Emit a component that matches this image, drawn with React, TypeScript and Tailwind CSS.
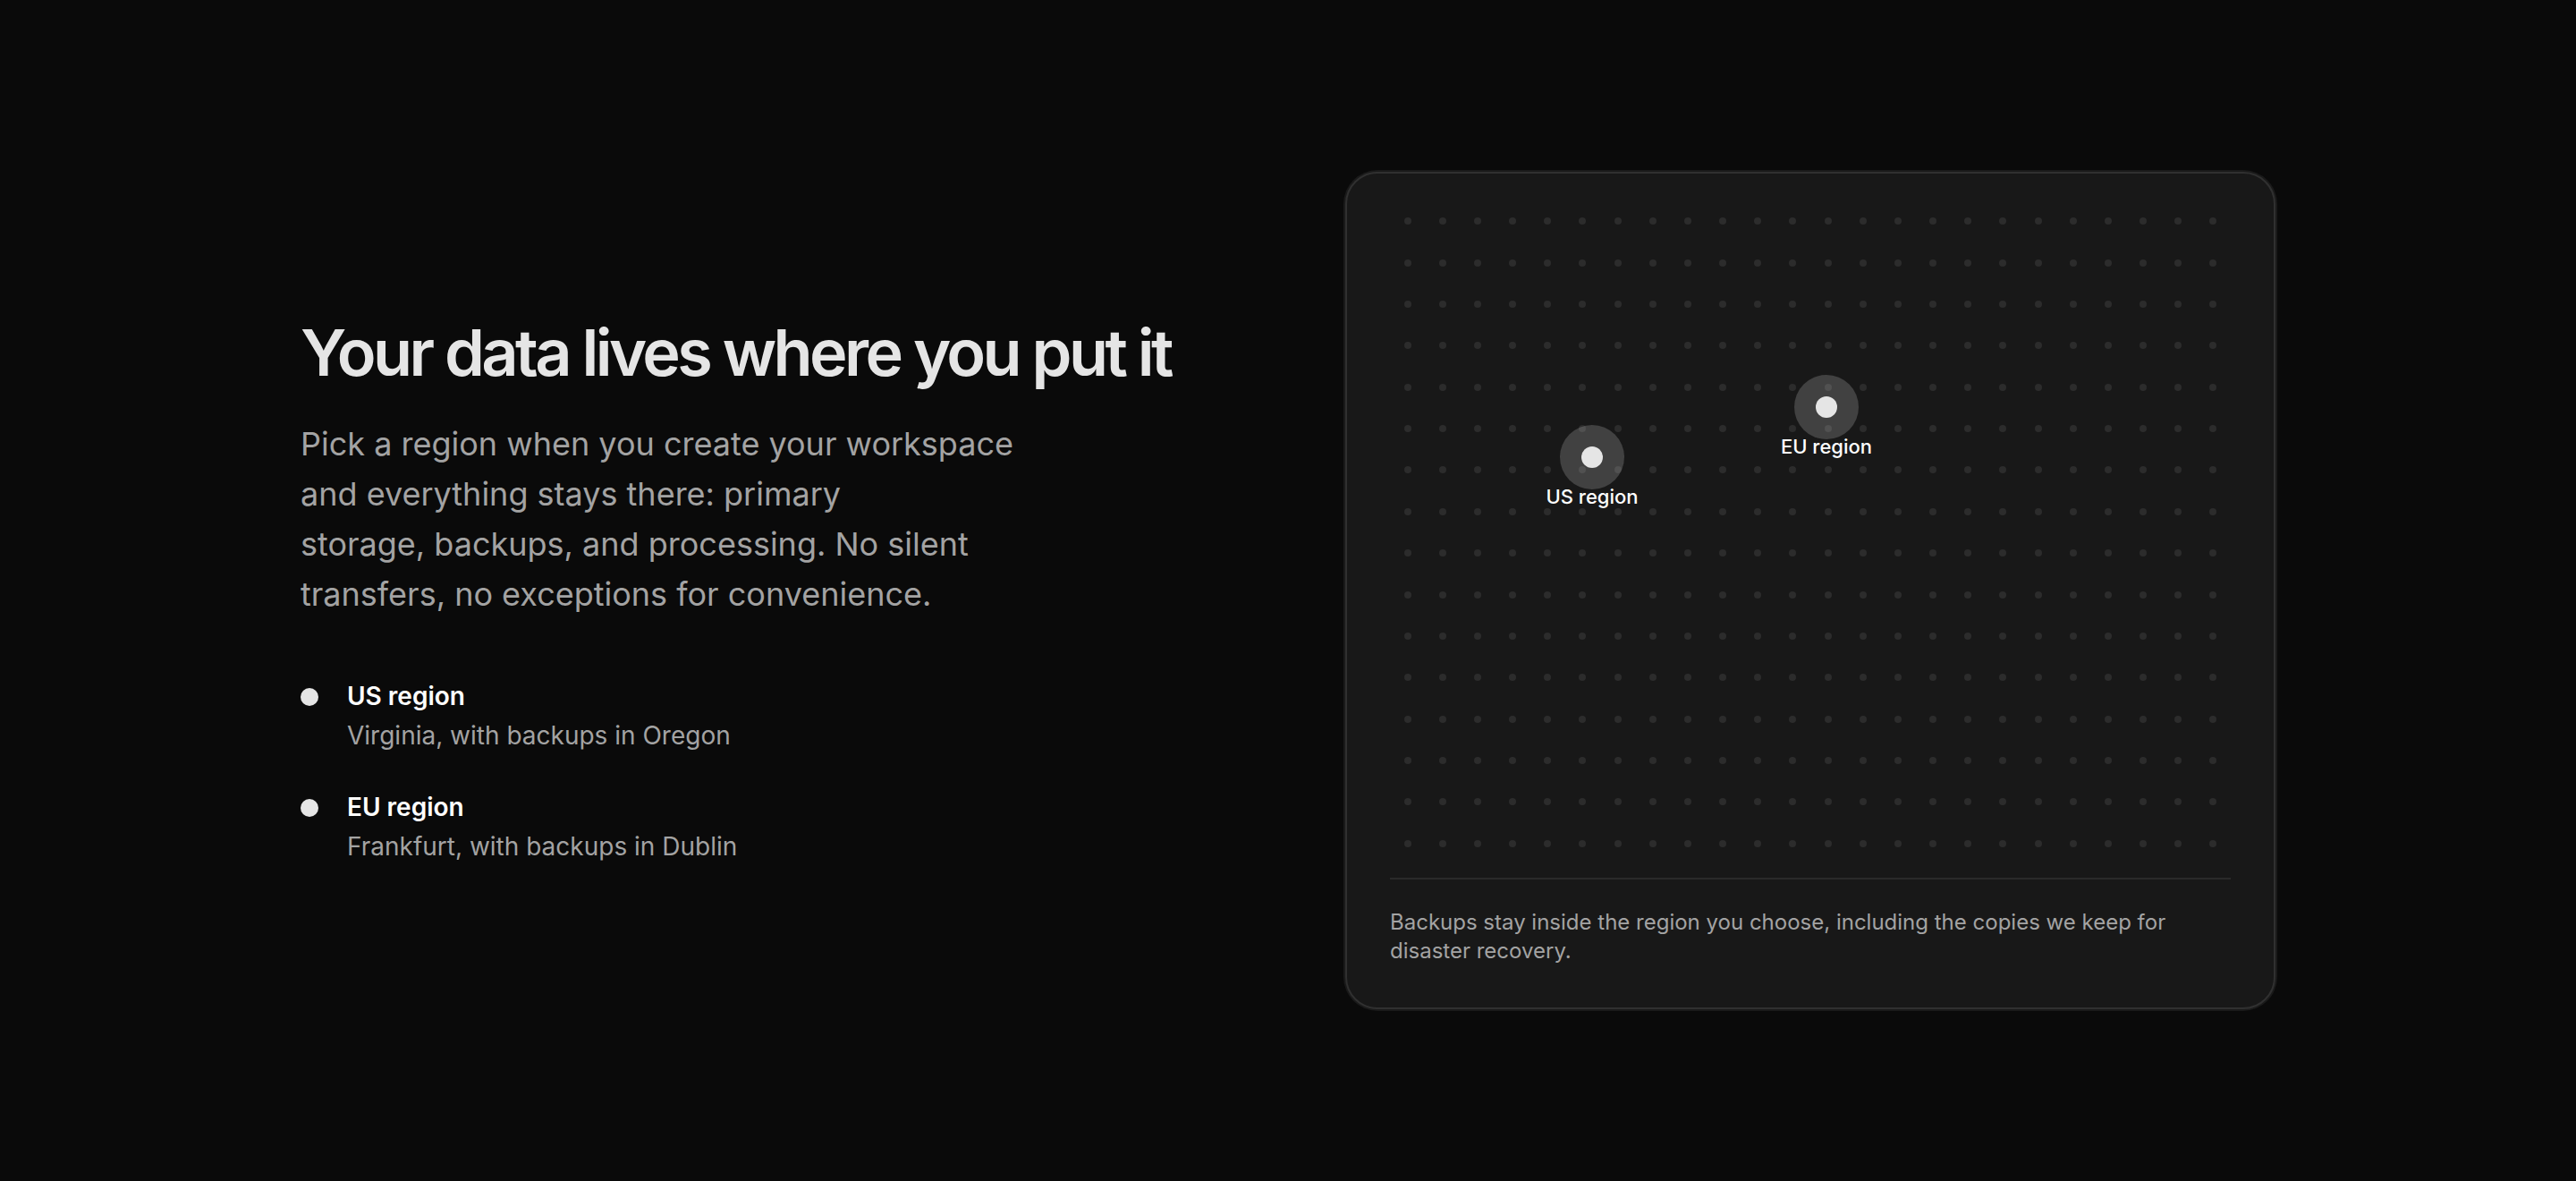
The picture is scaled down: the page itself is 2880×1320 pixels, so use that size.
const dots = Array.from({ length: 384 }, (_, i) => i);

function Pin({ label, x, y }: { label: string; x: string; y: string }) {
  return (
    <div className={`absolute flex w-[200px] -translate-x-1/2 flex-col items-center ${x} ${y}`}>
      <div className="flex h-[72px] w-[72px] items-center justify-center rounded-full bg-[#e5e5e5]/20">
        <div className="h-6 w-6 rounded-full bg-[#e5e5e5]" />
      </div>
      <div className="text-[22px] leading-[16px] font-medium text-white">{label}</div>
    </div>
  );
}

function Region({ title, sub }: { title: string; sub: string }) {
  return (
    <li className="flex gap-[32px]">
      <div className="mt-[13px] h-5 w-5 shrink-0 rounded-full bg-[#e5e5e5]" />
      <div className="flex flex-col">
        <div className="text-[28px] leading-[44px] font-semibold text-white">{title}</div>
        <div className="text-[28px] leading-[44px] text-[#a3a3a3]">{sub}</div>
      </div>
    </li>
  );
}

export default function App() {
  return (
    <div className="flex h-[1320px] w-full items-center justify-center bg-[#0a0a0a] font-['Inter',sans-serif]">
      <div className="flex w-[2208px] items-center justify-between">
        <div className="flex flex-col pt-[2px]">
          <h1 className="text-[72px] leading-[80px] font-semibold tracking-[-0.05em] text-[#e5e5e5]">
            Your data lives where you put it
          </h1>
          <p className="mt-[34px] text-[36px] leading-[56px] text-[#a3a3a3]">
            Pick a region when you create your workspace
            <br />
            and everything stays there: primary
            <br />
            storage, backups, and processing. No silent
            <br />
            transfers, no exceptions for convenience.
          </p>
          <ul className="mt-[64px] flex flex-col gap-[36px]">
            <Region title="US region" sub="Virginia, with backups in Oregon" />
            <Region title="EU region" sub="Frankfurt, with backups in Dublin" />
          </ul>
        </div>
        <div className="flex w-[1040px] flex-col rounded-[36px] border-[2px] border-[#303030] bg-[#181818] px-[48px] pt-[30px] pb-[47px] ring-[2px] ring-[#1a1a1a]">
          <div className="relative">
            <div className="grid h-[742px] grid-cols-[repeat(24,1fr)] grid-rows-[repeat(16,1fr)]">
              {dots.map((d) => (
                <div key={d} className="flex items-center justify-center">
                  <div className="h-2 w-2 rounded-full bg-[#2c2c2c]" />
                </div>
              ))}
            </div>
            <Pin label="US region" x="left-[226px]" y="top-[251px]" />
            <Pin label="EU region" x="left-[488px]" y="top-[195px]" />
          </div>
          <div className="mt-[15px] border-t-[2px] border-[#2a2a2a] pt-[32px]">
            <p className="text-[24px] leading-[32px] text-[#a3a3a3]">
              Backups stay inside the region you choose, including the copies we keep for disaster recovery.
            </p>
          </div>
        </div>
      </div>
    </div>
  );
}
